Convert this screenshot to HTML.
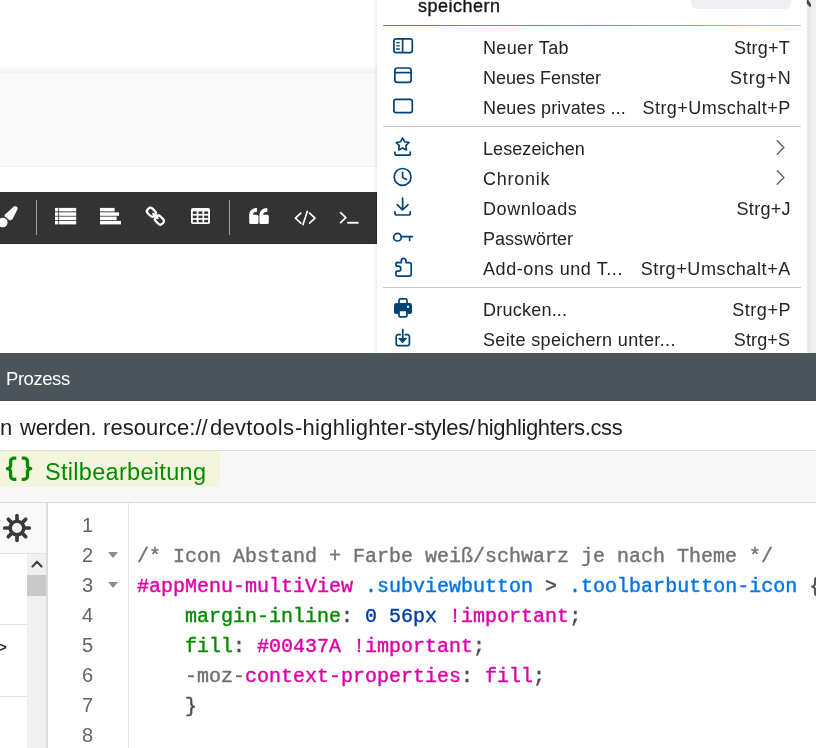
<!DOCTYPE html>
<html lang="de">
<head>
<meta charset="utf-8">
<title>Stilbearbeitung</title>
<style>
*{box-sizing:border-box;margin:0;padding:0}
html,body{width:816px;height:748px;overflow:hidden;background:#fff;font-family:"Liberation Sans",sans-serif;}
body{position:relative}
.abs{position:absolute}
.mi,.cl,.ln,#urlrow span,#tab span,#dbar span,.gs{will-change:transform}
/* page top */
#strip{left:0;top:68px;width:380px;height:98.500px;background:linear-gradient(#f8f8f8 0,#f6f6f6 3px,#f1f1f1 4.500px,#f9f9f9 5.500px,#fafafa 6px,#fafafa 97px,#f3f3f3 98.500px)}
#toolbar{left:0;top:192px;width:377px;height:51.600px;background:#333;box-shadow:inset -1px -1px 0 #2a2a2a}
#toolbar .sep{position:absolute;top:8px;width:1px;height:35px;background:#a0a0a0}
#toolbar svg{position:absolute;fill:#fff}
/* menu */
#menu{left:377.400px;top:-20px;width:429.400px;height:380px;background:#fff;box-shadow:0 0 4px rgba(0,0,0,.16)}
#rshadow{left:806.600px;top:0;width:9.400px;height:353px;background:linear-gradient(90deg,#f4f4f6 0,#e3e3e3 12%,#e6e6e6 25%,#eeeeee 50%,#f0f0f0 100%)}
.mi{position:absolute;left:377px;width:429px;height:30px;font-size:18px;line-height:30px;color:#24232a;white-space:nowrap}
.mi .l{position:absolute;left:106px;top:0}
.mi .r{position:absolute;right:16px;top:0}
.mi svg{position:absolute;left:14px;top:3px;width:24px;height:24px;fill:none;stroke:#00437A;stroke-width:1.6;stroke-linecap:round;stroke-linejoin:round}
.msep{position:absolute;left:383px;width:417.500px;height:1px;background:#c8c8cc}
/* devtools */
#dbar{left:0;top:353px;width:816px;height:47.600px;background:#4b535b;color:#fff;font-size:19px;line-height:48px;box-shadow:inset 0 -1px 0 #454c53}
#urlrow{left:0;top:401px;width:816px;height:50px;background:#fff;border-bottom:1px solid #dcdcdc;font-size:22px;color:#1f1f1f;white-space:nowrap}
#urlrow span{position:absolute;top:12px;line-height:30px}
#tabrow{left:0;top:451px;width:816px;height:52px;background:#f8f8f8;border-bottom:1px solid #dadada}
#tab{left:0;top:451px;width:220px;height:36px;background:#f4f5dd;color:#058b00;font-size:22px;line-height:36px;white-space:nowrap}
#side{left:0;top:503px;width:46px;height:245px;background:#fff}
#sidehead{left:0;top:503px;width:46px;height:51px;background:#f9f9f9;border-bottom:1px solid #e0e0e0}
#sb{left:27px;top:554px;width:19px;height:194px;background:#f0f0f0}
#thumb{left:27px;top:575px;width:19px;height:21px;background:#c9c9c9}
.hl{position:absolute;left:0;width:27px;height:1px;background:#e2e2e2}
#vsep{left:46px;top:503px;width:2px;height:245px;background:#dcdcdc}
#gutterline{left:128px;top:503px;width:1px;height:245px;background:#e6e6e6}
.ln{position:absolute;left:49px;width:44px;text-align:right;font-size:20px;line-height:30px;color:#666;height:30px}
.cl{position:absolute;left:137px;font-family:"Liberation Mono",monospace;font-size:20px;line-height:30px;height:30px;white-space:pre;color:#4a4a4f;-webkit-text-stroke:.4px}
.fold{position:absolute;left:108.200px;width:0;height:0;border-left:5.800px solid transparent;border-right:5.800px solid transparent;border-top:6.800px solid #8c8c8c}
.c{color:#737373}.id{color:#dd00a9}.k{color:#0074e8}.p{color:#058b00}.n{color:#003eaa}.v{color:#dd00a9}
</style>
</head>
<body>
<div class="abs" id="strip"></div>
<div class="abs" id="toolbar">
  <div class="sep" style="left:36px"></div>
  <div class="sep" style="left:229px"></div>
</div>

<div class="abs" id="menu"></div>
<div class="abs" id="rshadow"></div>
<div class="abs gs" style="left:418px;top:-6px;font-size:18px;line-height:24px;color:#15141a;letter-spacing:.5px;-webkit-text-stroke:.35px #15141a">speichern</div>
<div class="abs" style="left:691px;top:-10px;width:100px;height:19px;background:#f0f0f4;border-radius:5px"></div><svg class="abs" style="left:800px;top:0" width="16" height="10" viewBox="800 0 16 10"><path d="M806.800 0H808.300L811.100 4.400L810.900 6.900L809.300 6.400L806.800 3.400Z" fill="#484848"/></svg>
<div class="abs" style="left:383px;top:25px;width:418px;height:1px;background:linear-gradient(90deg,#9059ff 0%,#ff4aa2 52%,#ffbd4f 100%)"></div>

<div class="mi" style="top:33px"><span class="l" style="letter-spacing:0.36px">Neuer Tab</span><span class="r" style="letter-spacing:0.23px;margin-right:0.00px">Strg+T</span></div>
<div class="mi" style="top:63px"><span class="l" style="letter-spacing:-0.01px">Neues Fenster</span><span class="r" style="letter-spacing:0.85px;margin-right:-1.60px">Strg+N</span></div>
<div class="mi" style="top:93px"><span class="l" style="letter-spacing:0.16px">Neues privates ...</span><span class="r" style="letter-spacing:0.49px;margin-right:-0.80px">Strg+Umschalt+P</span></div>
<div class="msep" style="top:126px"></div>
<div class="mi" style="top:134px"><span class="l" style="letter-spacing:0.08px">Lesezeichen</span></div>
<div class="mi" style="top:164px"><span class="l" style="letter-spacing:0.76px">Chronik</span></div>
<div class="mi" style="top:194px"><span class="l" style="letter-spacing:0.59px">Downloads</span><span class="r" style="letter-spacing:0.32px;margin-right:-0.96px">Strg+J</span></div>
<div class="mi" style="top:224px"><span class="l" style="letter-spacing:-0.01px">Passwörter</span></div>
<div class="mi" style="top:254px"><span class="l" style="letter-spacing:0.58px">Add-ons und T...</span><span class="r" style="letter-spacing:0.61px;margin-right:-0.96px">Strg+Umschalt+A</span></div>
<div class="msep" style="top:287px"></div>
<div class="mi" style="top:295px"><span class="l" style="letter-spacing:0.23px">Drucken...</span><span class="r" style="letter-spacing:0.52px;margin-right:-0.96px">Strg+P</span></div>
<div class="mi" style="top:325px"><span class="l" style="letter-spacing:0.36px">Seite speichern unter...</span><span class="r" style="letter-spacing:0.13px;margin-right:-0.14px">Strg+S</span></div>


<svg class="abs" style="left:386px;top:30px" width="40" height="322" viewBox="386 30 40 322" fill="none" stroke="#00437A" stroke-width="1.7" stroke-linecap="round" stroke-linejoin="round">
  <!-- new tab / sidebar -->
  <rect x="393.9" y="38.9" width="18.4" height="13.8" rx="2.2"/>
  <path d="M402.6 39v13.6" stroke-linecap="butt"/>
  <path d="M396.300 42.600h3.400M396.300 45.800h3.400M396.300 49h3.400" stroke-width="1.300" stroke-linecap="butt"/>
  <!-- new window -->
  <rect x="394.9" y="68" width="16.2" height="14.4" rx="2.4"/>
  <path d="M395 72.6h16" stroke-linecap="butt"/>
  <!-- private window -->
  <rect x="393.9" y="99.4" width="18.4" height="13.2" rx="2.2"/>
  <!-- bookmarks -->
  <path d="M402.60 137.85L404.63 141.76L408.97 142.48L405.88 145.62L406.54 149.97L402.60 148.00L398.66 149.97L399.32 145.62L396.23 142.48L400.57 141.76Z" stroke-width="1.6"/>
  <path d="M394.9 152v1.4a1.8 1.8 0 0 0 1.8 1.8h11.8a1.8 1.8 0 0 0 1.8-1.8v-1.4"/>
  <!-- history -->
  <circle cx="402.6" cy="176.9" r="8.4"/>
  <path d="M402.6 172.4v5.2l3.9 1.9"/>
  <!-- downloads -->
  <path d="M402.6 198.2v11.6M397.2 204.6l5.4 5.4 5.4-5.4"/>
  <path d="M395 211.8v1.4a1.8 1.8 0 0 0 1.8 1.8h11.6a1.8 1.8 0 0 0 1.8-1.8v-1.4"/>
  <!-- passwords -->
  <circle cx="397.5" cy="237.2" r="3.8"/>
  <path d="M401.4 236.6h11M409.6 236.8v3.6"/>
  <!-- add-ons -->
  <path d="M397.4 262.6h3.9v-1.9a2.35 2.35 0 0 1 4.7 0v1.9h3.4a1.8 1.8 0 0 1 1.8 1.8v10a1.8 1.8 0 0 1-1.8 1.8h-12a1.5 1.5 0 0 1-1.5-1.500v-2.4a1.200 1.200 0 0 1 1.200-1.200h1.300a2.450 2.450 0 0 0 0-4.900h-1.300a1.200 1.200 0 0 1-1.200-1.200v-1.100a1.5 1.500 0 0 1 1.500-1.500z"/>
  <!-- print -->
  <path d="M396.400 303h13.200a2.400 2.400 0 0 1 2.400 2.400v6.600a2 2 0 0 1-2 2h-14a2 2 0 0 1-2-2v-6.600a2.400 2.400 0 0 1 2.400-2.400z" fill="#00437A" stroke="none"/>
  <path d="M399 303.800v-3.400a1.500 1.500 0 0 1 1.500-1.500h5a1.500 1.500 0 0 1 1.500 1.500v3.400"/>
  <rect x="399" y="310.300" width="8" height="6.600" rx="1.400" fill="#fff"/>
  <rect x="407" y="305.800" width="2" height="2" fill="#fff" stroke="none"/>
  <!-- save page -->
  <path d="M400.200 334.700h-2.200a1.800 1.800 0 0 0-1.800 1.800v7.400a1.800 1.800 0 0 0 1.800 1.800h9.600a1.800 1.800 0 0 0 1.800-1.800v-7.400a1.800 1.800 0 0 0-1.800-1.800h-2.200"/>
  <path d="M402.800 329.600v9"/>
  <path d="M399 338.400h7.600l-3.800 4.200z" fill="#00437A" stroke-width="1"/>
  <!-- chevrons -->
</svg>
<svg class="abs" style="left:770px;top:135px" width="24" height="56" viewBox="770 135 24 56" fill="none" stroke="#5b5b66" stroke-width="1.3" stroke-linecap="round" stroke-linejoin="round">
  <path d="M777.200 140.800l6.700 6.700-6.700 6.700M777.200 170.800l6.700 6.700-6.700 6.700"/>
</svg>

<svg class="abs" style="left:0;top:192px" width="377" height="51" viewBox="0 192 377 51" fill="#fff">
  <!-- brush -->
  <path d="M13.900 206.500C16.200 205.300 18.300 207.200 17.400 209.300L13 218.300C11.900 220.400 9.300 221 7.400 219.700L5.500 218.200C4.300 217.100 4.200 215.400 5.300 214.300Z"/>
  <circle cx="2.800" cy="222.500" r="4.800"/>
  <path d="M3.600 216.200L9.400 220.900" stroke="#333" stroke-width="1.100" fill="none"/>
  <!-- list -->
  <g><rect x="55" y="207.9" width="3.300" height="3.500"/><rect x="59.100" y="207.9" width="17.100" height="3.500"/><rect x="55" y="212.3" width="3.300" height="3.500"/><rect x="59.100" y="212.3" width="17.100" height="3.500"/><rect x="55" y="216.6" width="3.300" height="3.500"/><rect x="59.100" y="216.6" width="17.100" height="3.500"/><rect x="55" y="220.9" width="3.300" height="3.500"/><rect x="59.100" y="220.9" width="17.100" height="3.500"/></g>
  <!-- align left -->
  <rect x="100" y="207.900" width="14.600" height="3.500"/>
  <rect x="100" y="212.300" width="19" height="3.500"/>
  <rect x="100" y="216.600" width="16.600" height="3.500"/>
  <rect x="100" y="220.900" width="21" height="3.500"/>
  <!-- link -->
  <g fill="none" stroke="#fff" stroke-width="2.300">
    <rect x="-4.600" y="-3.300" width="9.200" height="6.600" rx="2.800" transform="translate(151.400 212.200) rotate(45)"/>
    <rect x="-4.600" y="-3.300" width="9.200" height="6.600" rx="2.800" transform="translate(159.400 220.100) rotate(45)"/>
  </g>
  <path d="M153.200 213.800l4.400 4.400" stroke="#fff" stroke-width="2.200" stroke-linecap="round"/>
  <!-- table -->
  <rect x="191" y="208" width="19" height="16" rx="1.800"/>
  <g fill="#333">
   <rect x="192.800" y="211.400" width="3.900" height="2.500"/><rect x="198.500" y="211.400" width="3.900" height="2.500"/><rect x="204.200" y="211.400" width="3.900" height="2.500"/>
   <rect x="192.800" y="215.600" width="3.900" height="2.500"/><rect x="198.500" y="215.600" width="3.900" height="2.500"/><rect x="204.200" y="215.600" width="3.900" height="2.500"/>
   <rect x="192.800" y="219.800" width="3.900" height="2.500"/><rect x="198.500" y="219.800" width="3.900" height="2.500"/><rect x="204.200" y="219.800" width="3.900" height="2.500"/>
  </g>
  <!-- quote -->
  <path d="M249.20 222.6V215.6C249.20 210.9 252.40 208 257.10 208V211.7C254.60 211.7 253.00 212.7 253.00 214.7H257.00a1.5 1.5 0 0 1 1.5 1.5V222.6a1.5 1.5 0 0 1-1.5 1.5H250.70a1.5 1.5 0 0 1-1.5-1.5Z"/>
  <path d="M259.40 222.6V215.6C259.40 210.9 262.60 208 267.30 208V211.7C264.80 211.7 263.20 212.7 263.20 214.7H267.30a1.5 1.5 0 0 1 1.5 1.5V222.6a1.5 1.5 0 0 1-1.5 1.5H260.90a1.5 1.5 0 0 1-1.5-1.5Z"/>
  <!-- code -->
  <g fill="none" stroke="#fff" stroke-width="1.700" stroke-linecap="round" stroke-linejoin="round">
   <path d="M300.800 213.200l-5.400 5 5.400 5M309.600 213.200l5.400 5-5.400 5M307.300 211.400l-4.300 13.200"/>
   <path d="M340.600 212.600l5.200 5-5.200 5"/>
  </g>
  <rect x="347.200" y="221.800" width="11.400" height="1.900"/>
</svg>
<div class="abs" id="dbar"><span id="prz" style="position:absolute;left:5.500px;top:2px;font-size:18.500px;letter-spacing:-0.45px">Prozess</span></div>
<div class="abs" id="urlrow"><span id="u1" style="left:0">n</span><span id="u2" style="left:19.9px;letter-spacing:-0.26px">werden.</span><span id="u3" style="left:103.0px;letter-spacing:0.08px">resource://</span><span id="u4" style="left:209.5px;letter-spacing:0.30px">devtools</span><span id="u5" style="left:294.5px;letter-spacing:0.28px">-highlighter</span><span id="u6" style="left:407.0px;letter-spacing:-0.21px">-styles/</span><span id="u7" style="left:476.5px;letter-spacing:-0.40px">highlighters.css</span></div>
<div class="abs" id="tabrow"></div>
<div class="abs" id="tab"><svg style="position:absolute;left:0;top:0" width="40" height="36" viewBox="0 451 40 36" fill="none" stroke="#058b00" stroke-width="3.300" stroke-linejoin="round" stroke-linecap="butt"><path d="M16.30 458.1H13.90A3.3 3.3 0 0 0 10.60 461.4V465.4A3.1 3.1 0 0 1 7.50 468.7H7.40H7.50A3.1 3.1 0 0 1 10.60 472V476A3.3 3.3 0 0 0 13.90 479.3H16.30"/><path d="M21.80 458.1H24.20A3.3 3.3 0 0 1 27.50 461.4V465.4A3.1 3.1 0 0 0 30.60 468.7H30.70H30.60A3.1 3.1 0 0 0 27.50 472V476A3.3 3.3 0 0 1 24.20 479.3H21.80"/></svg><span id="tabtxt" style="position:absolute;left:44.500px;top:3px;font-size:23.500px;letter-spacing:0.30px">Stilbearbeitung</span></div>
<div class="abs" id="side"></div>
<div class="abs" id="sidehead"><svg style="position:absolute;left:1.900px;top:9.900px" width="30" height="30" viewBox="-15 -15 30 30" fill="none" stroke="#3a3a3a" stroke-linecap="round"><circle r="6.800" stroke-width="3.500"/><path stroke-width="3.700" d="M7.60 0.00L12.30 0.00M5.37 5.37L8.70 8.70M0.00 7.60L0.00 12.30M-5.37 5.37L-8.70 8.70M-7.60 0.00L-12.30 0.00M-5.37 -5.37L-8.70 -8.70M-0.00 -7.60L-0.00 -12.30M5.37 -5.37L8.70 -8.70"/></svg></div>
<div class="abs" id="sb"><svg style="position:absolute;left:4px;top:5px" width="12" height="10" viewBox="0 0 12 10" fill="none" stroke="#444" stroke-width="2.200" stroke-linecap="round" stroke-linejoin="round"><path d="M1.500 7.500l4.500-4.800 4.500 4.800"/></svg></div>
<div class="abs" id="thumb"></div>
<div class="hl" style="top:624px"></div>
<div class="hl" style="top:696px"></div>
<div class="abs gs" style="left:-5px;top:634px;font-size:21px;line-height:26px;color:#222">&gt;</div>
<div class="abs" id="vsep"></div>
<div class="abs" id="gutterline"></div>

<div class="ln" style="top:510px">1</div>
<div class="ln" style="top:540px">2</div>
<div class="ln" style="top:570px">3</div>
<div class="ln" style="top:600px">4</div>
<div class="ln" style="top:630px">5</div>
<div class="ln" style="top:660px">6</div>
<div class="ln" style="top:690px">7</div>
<div class="ln" style="top:720px">8</div>
<div class="fold" style="top:551.6px"></div>
<div class="fold" style="top:581.6px"></div>

<div class="cl" style="top:542px"><span class="c">/* Icon Abstand + Farbe weiß/schwarz je nach Theme */</span></div>
<div class="cl" style="top:572px"><span class="id">#appMenu-multiView</span> <span class="k">.subviewbutton</span> &gt; <span class="k">.toolbarbutton-icon</span> {</div>
<div class="cl" style="top:602px">    <span class="p">margin-inline</span>: <span class="n">0 56px</span> <span class="v">!important</span>;</div>
<div class="cl" style="top:632px">    <span class="p">fill</span>: <span class="v">#00437A</span> <span class="v">!important</span>;</div>
<div class="cl" style="top:662px">    <span style="color:#6f6f6f">-moz-</span><span class="v">context-properties</span>: <span class="v">fill</span>;</div>
<div class="cl" style="top:692px">    }</div>
</body>
</html>
